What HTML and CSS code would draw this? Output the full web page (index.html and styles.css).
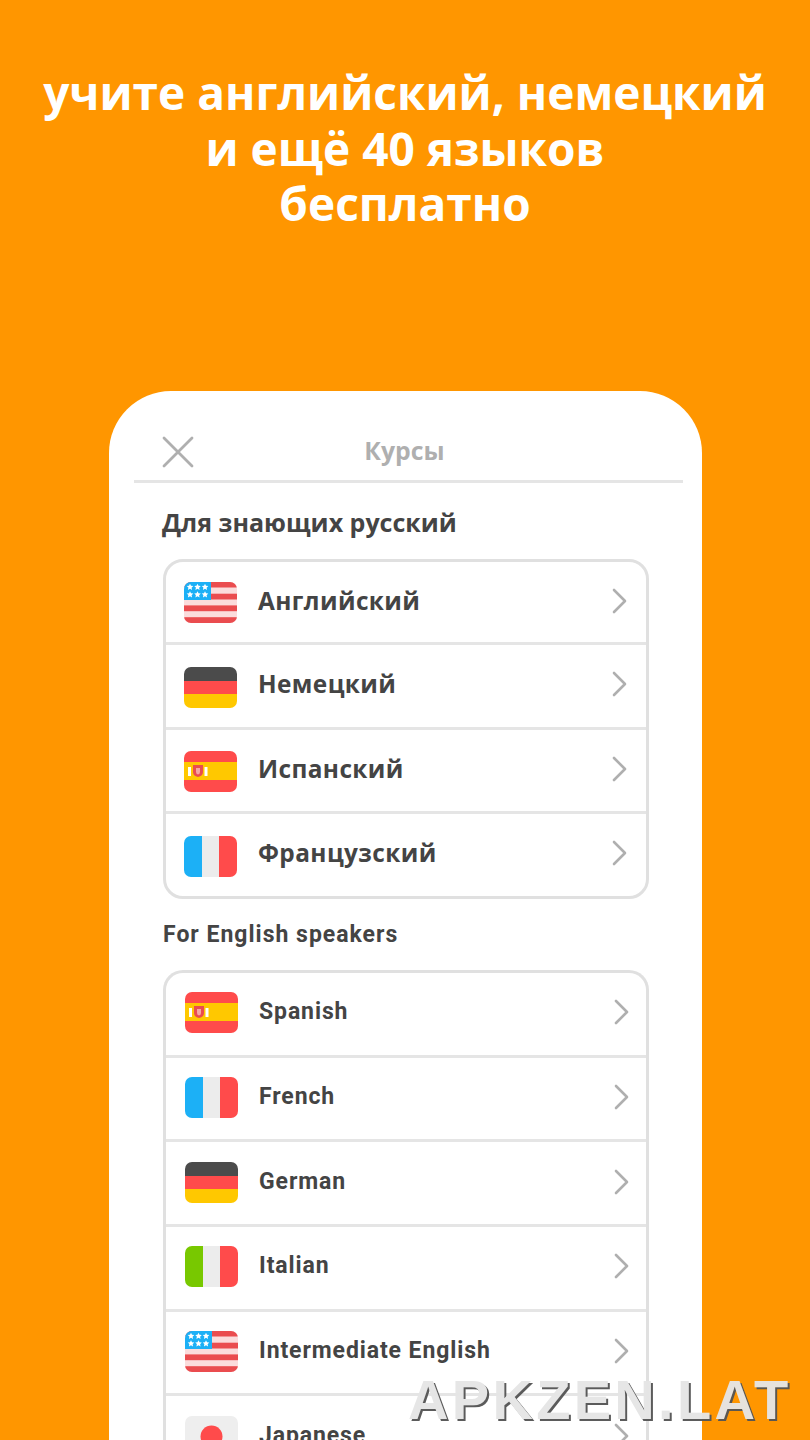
FILE: index.html
```html
<!DOCTYPE html>
<html lang="ru">
<head>
<meta charset="utf-8">
<title>Курсы</title>
<link rel="stylesheet" href="styles.css">
</head>
<body>
<svg class="defs" width="0" height="0" aria-hidden="true">
  <defs>
    <clipPath id="fc"><rect width="53" height="41" rx="7"/></clipPath>
    <path id="star" d="M0-3.300l1 2.100 2.300.3-1.700 1.600.5 2.300L0 1.700-2.100 2.900l.5-2.300L-3.300-.9l2.300-.3z" fill="#fff"/>
    <symbol id="us" viewBox="0 0 53 41"><g clip-path="url(#fc)"><rect width="53" height="41" fill="#fbdcdc"/><g fill="#ea4c4f"><rect y="0" width="53" height="5.500"/><rect y="11.700" width="53" height="5.800"/><rect y="23.400" width="53" height="5.800"/><rect y="35.200" width="53" height="5.800"/></g><rect width="27" height="18" fill="#1cb0f6"/><use href="#star" x="6" y="5"/><use href="#star" x="13.500" y="5"/><use href="#star" x="21" y="5"/><use href="#star" x="6" y="12.500"/><use href="#star" x="13.500" y="12.500"/><use href="#star" x="21" y="12.500"/></g></symbol>
    <symbol id="de" viewBox="0 0 53 41"><g clip-path="url(#fc)"><rect width="53" height="14" fill="#4b4b4b"/><rect y="14" width="53" height="14" fill="#ff4b4b"/><rect y="27" width="53" height="14" fill="#ffc800"/></g></symbol>
    <symbol id="es" viewBox="0 0 53 41"><g clip-path="url(#fc)"><rect width="53" height="41" fill="#ff4b4b"/><rect y="11" width="53" height="18" fill="#ffc800"/><rect x="4" y="16" width="3" height="9" fill="#fff"/><path d="M9 14h10v7q0 4-5 5-5-1-5-5z" fill="#ea4c4f"/><path d="M12 17h4v4q0 2-2 2.500-2-.5-2-2.500z" fill="#f6a6a0"/><rect x="20.500" y="16" width="3" height="9" fill="#fff"/></g></symbol>
    <symbol id="fr" viewBox="0 0 53 41"><g clip-path="url(#fc)"><rect width="18" height="41" fill="#1cb0f6"/><rect x="18" width="17" height="41" fill="#ececec"/><rect x="35" width="18" height="41" fill="#ff4b4b"/></g></symbol>
    <symbol id="it" viewBox="0 0 53 41"><g clip-path="url(#fc)"><rect width="18" height="41" fill="#78c800"/><rect x="18" width="17" height="41" fill="#ececec"/><rect x="35" width="18" height="41" fill="#ff4b4b"/></g></symbol>
    <symbol id="jp" viewBox="0 0 53 41"><g clip-path="url(#fc)"><rect width="53" height="41" fill="#eeeeee"/><circle cx="26.500" cy="20.500" r="11" fill="#ff4b4b"/></g></symbol>
    <symbol id="chev" viewBox="0 0 16 26"><path d="M2 2l11 11L2 24" fill="none" stroke="#afafaf" stroke-width="2.600" stroke-linecap="round" stroke-linejoin="round"/></symbol>
  </defs>
</svg>

<main class="screen">
  <h1 class="headline">учите английский, немецкий<br>и ещё 40 языков<br>бесплатно</h1>

  <section class="phone">
    <header class="phone-head">
      <svg class="close" viewBox="0 0 32 32" aria-hidden="true"><path d="M2 2l28 28M30 2L2 30" stroke="#afafaf" stroke-width="2.800" stroke-linecap="round" fill="none"/></svg>
      <span class="phone-title">Курсы</span>
    </header>

    <h2 class="group-title ru">Для знающих русский</h2>
    <ul class="list ru">
      <li class="row"><svg class="flag"><use href="#us"/></svg><span class="name">Английский</span><svg class="chev"><use href="#chev"/></svg></li>
      <li class="row"><svg class="flag"><use href="#de"/></svg><span class="name">Немецкий</span><svg class="chev"><use href="#chev"/></svg></li>
      <li class="row"><svg class="flag"><use href="#es"/></svg><span class="name">Испанский</span><svg class="chev"><use href="#chev"/></svg></li>
      <li class="row"><svg class="flag"><use href="#fr"/></svg><span class="name">Французский</span><svg class="chev"><use href="#chev"/></svg></li>
    </ul>

    <h2 class="group-title en">For English speakers</h2>
    <ul class="list en">
      <li class="row"><svg class="flag"><use href="#es"/></svg><span class="name">Spanish</span><svg class="chev"><use href="#chev"/></svg></li>
      <li class="row"><svg class="flag"><use href="#fr"/></svg><span class="name">French</span><svg class="chev"><use href="#chev"/></svg></li>
      <li class="row"><svg class="flag"><use href="#de"/></svg><span class="name">German</span><svg class="chev"><use href="#chev"/></svg></li>
      <li class="row"><svg class="flag"><use href="#it"/></svg><span class="name">Italian</span><svg class="chev"><use href="#chev"/></svg></li>
      <li class="row"><svg class="flag"><use href="#us"/></svg><span class="name">Intermediate English</span><svg class="chev"><use href="#chev"/></svg></li>
      <li class="row"><svg class="flag"><use href="#jp"/></svg><span class="name">Japanese</span><svg class="chev"><use href="#chev"/></svg></li>
    </ul>
  </section>

  <div class="watermark">APKZEN.LAT</div>
</main>
</body>
</html>
```

FILE: styles.css
```css
* { box-sizing: border-box; }
html, body { margin: 0; padding: 0; }
body { width: 810px; height: 1440px; overflow: hidden; background: #ff9600; font-family: "Open Sans", "Noto Sans", sans-serif; }
.defs { position: absolute; }
.screen { position: relative; width: 810px; height: 1440px; overflow: hidden; padding-top: 65px; }
.headline { margin: 0; text-align: center; color: #fff; font-family: "Open Sans", sans-serif; font-weight: 700; font-size: 46px; line-height: 55.500px; }
.phone { width: 593px; height: 1100px; margin-top: 159.500px; margin-left: 109px; background: #fff; border-radius: 62px 62px 0 0; padding: 0 19px 0 25px; }
.phone-head { position: relative; height: 92px; border-bottom: 3px solid #e5e5e5; display: flex; align-items: center; justify-content: center; padding-top: 28px; }
.close { position: absolute; left: 28px; top: 45px; width: 32px; height: 32px; }
.phone-title { color: #afafaf; font-weight: 700; font-size: 24.800px; margin-left: -8px; }
.group-title { margin: 0; color: #444; font-weight: 700; }
.group-title.ru { font-size: 25px; line-height: 32px; margin: 23px 0 21px 28px; }
.group-title.en { font-family: "Roboto", sans-serif; font-weight: 700; font-size: 23px; line-height: 28px; letter-spacing: 1px; margin: 22px 0 21px 29px; }
.list { list-style: none; margin: 0 0 0 29px; padding: 0; width: 486px; border: 3px solid #e0e0e0; border-radius: 20px; }
.list.en { border-bottom: 0; border-radius: 20px 20px 0 0; }
.row { height: 84.500px; display: flex; align-items: center; padding: 0 18px 0 18px; border-top: 3px solid #e5e5e5; }
.row:first-child { border-top: 0; height: 80px; }
.en .row { padding: 0 16px 0 19px; height: 84.700px; }
.en .row:first-child { height: 82px; }
.flag { width: 53px; height: 41px; flex: none; margin-top: 3px; }
.row:first-child .flag { margin-top: 0; }
.en .flag, .en .row:first-child .flag { margin-top: 0; margin-bottom: 2px; }
.name { flex: 1; margin-left: 21px; margin-bottom: 4px; color: #444; font-weight: 700; font-size: 24.400px; letter-spacing: 0.4px; }
.en .name { font-family: "Roboto", sans-serif; font-weight: 700; font-size: 23px; letter-spacing: 0.9px; margin-bottom: 4px; }
.chev { width: 16px; height: 26px; flex: none; margin-bottom: 3px; }
.en .chev { margin-bottom: 3px; }
.watermark { position: absolute; left: 408px; top: 1368px; color: #e6e6e6; font-family: "Liberation Sans", sans-serif; font-weight: 700; font-size: 56px; line-height: 64px; letter-spacing: 3.300px; text-shadow: 2px 2px 0 #555; opacity: 0.96; white-space: nowrap; }
```
